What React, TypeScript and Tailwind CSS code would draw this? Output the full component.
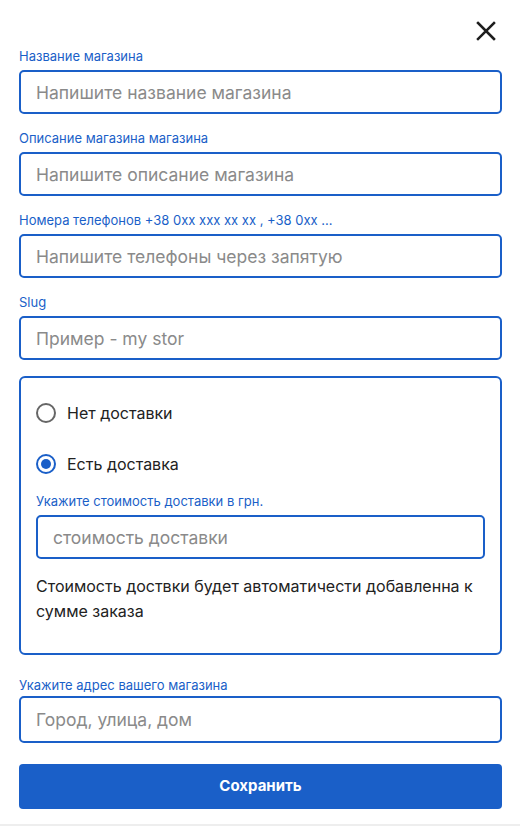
import React from "react";

const Field = ({
  label,
  placeholder,
  height = "h-[44px]",
  gap = "mb-[6px]",
}: {
  label: string;
  placeholder: string;
  height?: string;
  gap?: string;
}) => {
  return (
    <div className="flex flex-col">
      <label className={`text-[13px] leading-[16px] text-[#1a5fc8] whitespace-nowrap ${gap}`}>
        {label}
      </label>
      <input
        className={`${height} w-full rounded-[5px] border-2 border-[#1a5fc8] px-[15px] text-[17.5px] text-[#222] placeholder:text-[#8a8a8a] outline-none`}
        placeholder={placeholder}
      />
    </div>
  );
};

const Radio = ({ checked, label }: { checked?: boolean; label: string }) => {
  return (
    <div className="flex items-center gap-[11px] h-[24px]">
      <div
        className={`w-[20px] h-[20px] rounded-full border-2 flex items-center justify-center ${
          checked ? "border-[#1a5fc8]" : "border-[#666]"
        }`}
      >
        {checked && <div className="w-[10px] h-[10px] rounded-full bg-[#1a5fc8]" />}
      </div>
      <span className="text-[16px] text-[#222]">{label}</span>
    </div>
  );
};

const App = () => {
  return (
    <div className="w-full min-h-[826px] bg-white font-['Inter',sans-serif] flex flex-col">
      <div className="flex flex-col pl-[19px] pr-[18px] pt-[20px] pb-[15px]">
        <div className="flex justify-end pr-[5px] mb-[6px]">
          <svg width="22" height="22" viewBox="0 0 22 22" fill="none">
            <path
              d="M3 3L19 19M19 3L3 19"
              stroke="#1e1e1e"
              strokeWidth="2.5"
              strokeLinecap="square"
            />
          </svg>
        </div>

        <div className="flex flex-col gap-[16px]">
          <Field label="Название магазина" placeholder="Напишите название магазина" />
          <Field label="Описание магазина магазина" placeholder="Напишите описание магазина" />
          <Field
            label="Номера телефонов +38 0xx xxx xx xx , +38 0xx ..."
            placeholder="Напишите телефоны через запятую"
          />
          <Field label="Slug" placeholder="Пример - my stor" />

          <div className="rounded-[6px] border-2 border-[#1a5fc8] px-[15px] pt-[23px] pb-[29px] flex flex-col">
            <Radio label="Нет доставки" />
            <div className="mt-[27px]">
              <Radio checked label="Есть доставка" />
            </div>
            <div className="mt-[17px]">
              <Field
                label="Укажите стоимость доставки в грн."
                placeholder="стоимость доставки"
              />
            </div>
            <p className="mt-[15px] text-[16px] leading-[25px] text-[#222]">
              Стоимость доствки будет автоматичести добавленна к сумме заказа
            </p>
          </div>

          <div className="mt-[6px]">
            <Field
              label="Укажите адрес вашего магазина"
              placeholder="Город, улица, дом"
              height="h-[47px]"
              gap="mb-[3px]"
            />
          </div>

          <button className="mt-[5px] h-[45px] w-full rounded-[4px] bg-[#1a5fc8] text-white text-[15px] font-bold">
            Сохранить
          </button>
        </div>
      </div>
      <div className="flex-1 bg-white" />
      <div className="h-[3px] bg-[#eeeeee]" />
    </div>
  );
};

export default App;
